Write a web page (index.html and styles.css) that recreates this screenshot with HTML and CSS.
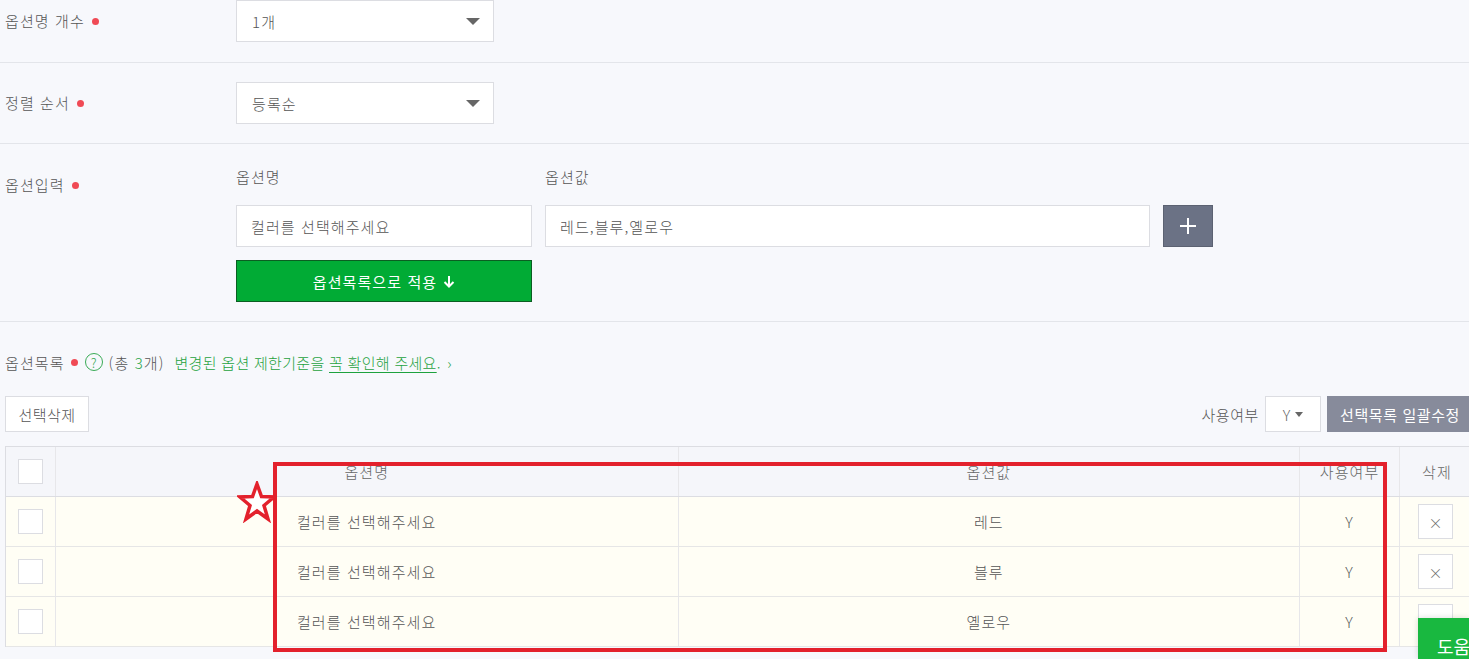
FILE: index.html
```html
<!DOCTYPE html>
<html lang="ko">
<head>
<meta charset="utf-8">
<title>옵션 설정</title>
<link rel="stylesheet" href="styles.css">
</head>
<body>
<div class="page">
  <div class="row row-first">
    <div class="label">옵션명 개수<span class="dot"></span></div>
    <div class="select"><span>1개</span><span class="caret"></span></div>
  </div>
  <div class="row row-second">
    <div class="label">정렬 순서<span class="dot"></span></div>
    <div class="select"><span>등록순</span><span class="caret"></span></div>
  </div>
  <div class="row row-input">
    <div class="label label-top">옵션입력<span class="dot"></span></div>
    <div class="input-area">
      <div class="input-grid">
        <div class="col-name">
          <div class="col-head">옵션명</div>
          <div class="text-input name-input">컬러를 선택해주세요</div>
          <div class="apply-btn">옵션목록으로 적용 <span class="arrow">
            <svg width="12" height="13" viewBox="0 0 12 13"><path d="M6 1v10M1.5 7l4.5 4.5L10.5 7" fill="none" stroke="#fff" stroke-width="2"/></svg>
          </span></div>
        </div>
        <div class="col-value">
          <div class="col-head">옵션값</div>
          <div class="value-line">
            <div class="text-input value-input">레드,블루,옐로우</div>
            <div class="plus-btn">
              <svg width="18" height="18" viewBox="0 0 18 18"><path d="M9 1v16M1 9h16" stroke="#fff" stroke-width="2"/></svg>
            </div>
          </div>
        </div>
      </div>
    </div>
  </div>
  <div class="list-section">
    <div class="list-title">
      <span>옵션목록</span><span class="dot"></span>
      <span class="help-icon">?</span>
      <span class="count">(총 <em>3</em>개)</span>
      <span class="notice">변경된 옵션 제한기준을 <u>꼭 확인해 주세요</u>. <span class="chev">›</span></span>
    </div>
    <div class="toolbar">
      <div class="btn-outline">선택삭제</div>
      <div class="toolbar-right">
        <span class="use-label">사용여부</span>
        <div class="mini-select">Y<span class="mini-caret"></span></div>
        <div class="batch-btn">선택목록 일괄수정</div>
      </div>
    </div>
    <div class="table">
      <div class="tr th">
        <div class="td c-check"><span class="checkbox"></span></div>
        <div class="td c-name center">옵션명</div>
        <div class="td c-value">옵션값</div>
        <div class="td c-use">사용여부</div>
        <div class="td c-del">삭제</div>
      </div>
      <div class="tr">
        <div class="td c-check"><span class="checkbox"></span></div>
        <div class="td c-name">컬러를 선택해주세요</div>
        <div class="td c-value">레드</div>
        <div class="td c-use">Y</div>
        <div class="td c-del"><span class="del-btn">×</span></div>
      </div>
      <div class="tr">
        <div class="td c-check"><span class="checkbox"></span></div>
        <div class="td c-name">컬러를 선택해주세요</div>
        <div class="td c-value">블루</div>
        <div class="td c-use">Y</div>
        <div class="td c-del"><span class="del-btn">×</span></div>
      </div>
      <div class="tr">
        <div class="td c-check"><span class="checkbox"></span></div>
        <div class="td c-name">컬러를 선택해주세요</div>
        <div class="td c-value">옐로우</div>
        <div class="td c-use">Y</div>
        <div class="td c-del"><span class="del-btn">×</span></div>
      </div>
    </div>
  </div>
  <div class="highlight-box"></div>
  <svg class="star" width="40" height="42" viewBox="0 0 40 42"><path d="M20 3 L24.5 15.5 L37 16 L27 24.5 L31 38 L20 30 L9 38 L13 24.5 L3 16 L15.5 15.5 Z" fill="#fff" stroke="#e3212c" stroke-width="3.5" stroke-linejoin="miter"/></svg>
  <div class="help-fab">도움</div>
</div>
</body>
</html>
```

FILE: styles.css
```css
* { box-sizing: border-box; }
html, body {
  margin: 0;
  padding: 0;
  background: #f7f8fc;
  overflow: hidden;
}
body {
  font-family: "Noto Sans CJK KR", "Noto Sans", "Liberation Sans", sans-serif;
  font-size: 15px;
  font-weight: 300;
  letter-spacing: 1.1px;
  color: #555;
  width: 1469px;
  height: 659px;
}
.page {
  position: relative;
  width: 1469px;
  height: 659px;
}
.row {
  display: flex;
  align-items: center;
  border-bottom: 1px solid #e3e5ea;
}
.row-first { padding: 0 0 20px 0; }
.row-second { padding: 19px 0 19px 0; }
.row-input { align-items: flex-start; padding: 20px 0 19px 0; }
.label {
  width: 236px;
  padding-left: 5px;
  display: flex;
  align-items: center;
  line-height: 22px;
  color: #555;
}
.label-top { padding-top: 10px; }
.dot {
  display: inline-block;
  width: 7px;
  height: 7px;
  border-radius: 50%;
  background: #f04a55;
  margin-left: 7px;
}
.select {
  width: 258px;
  height: 42px;
  background: #fff;
  border: 1px solid #dcdde2;
  display: flex;
  align-items: center;
  justify-content: space-between;
  padding: 0 13px 0 15px;
  color: #555;
}
.caret {
  width: 0;
  height: 0;
  border-left: 7px solid transparent;
  border-right: 7px solid transparent;
  border-top: 7px solid #666;
}
.input-grid { display: flex; gap: 13px; }
.col-head {
  height: 26px;
  line-height: 26px;
  margin-bottom: 15px;
  color: #555;
}
.text-input {
  height: 42px;
  background: #fff;
  border: 1px solid #dcdde2;
  display: flex;
  align-items: center;
  padding-left: 14px;
  color: #555;
}
.name-input { width: 296px; }
.value-line { display: flex; gap: 13px; }
.value-input { width: 605px; }
.plus-btn {
  width: 50px;
  height: 42px;
  background: #6b7285;
  border: 1px solid #5c6272;
  display: flex;
  align-items: center;
  justify-content: center;
}
.apply-btn {
  width: 296px;
  height: 42px;
  margin-top: 13px;
  background: #01ab35;
  border: 1px solid #0b5e22;
  color: #fff;
  font-weight: 400;
  display: flex;
  align-items: center;
  justify-content: center;
  gap: 6px;
}
.arrow { display: flex; align-items: center; }
.list-section { padding: 0 0 0 5px; }
.list-title {
  display: flex;
  align-items: center;
  height: 22px;
  margin-top: 29px;
  color: #555;
}
.list-title .dot { margin-left: 6px; margin-right: 7px; }
.help-icon {
  width: 18px;
  height: 18px;
  border: 1px solid #3aab56;
  border-radius: 50%;
  color: #3aab56;
  font-size: 13px;
  letter-spacing: 0;
  display: flex;
  align-items: center;
  justify-content: center;
  line-height: 1;
  margin-right: 6px;
}
.count em { font-style: normal; color: #23a344; }
.notice { color: #1ea23e; margin-left: 10px; letter-spacing: 0.3px; }
.notice u { text-underline-offset: 3px; }
.chev { margin-left: 2px; }
.toolbar {
  display: flex;
  justify-content: space-between;
  align-items: center;
  margin-top: 23px;
  height: 36px;
}
.btn-outline {
  width: 84px;
  height: 36px;
  border: 1px solid #dcdde2;
  background: #fff;
  display: flex;
  align-items: center;
  justify-content: center;
  color: #555;
  letter-spacing: 0.5px;
}
.toolbar-right { display: flex; align-items: center; margin-right: -10px; }
.use-label { margin-right: 6px; letter-spacing: 0.6px; }
.mini-select {
  width: 56px;
  height: 36px;
  background: #fff;
  border: 1px solid #dcdde2;
  display: flex;
  align-items: center;
  justify-content: center;
  gap: 4px;
  color: #666;
}
.mini-caret {
  width: 0;
  height: 0;
  border-left: 4px solid transparent;
  border-right: 4px solid transparent;
  border-top: 5px solid #666;
}
.batch-btn {
  width: 152px;
  height: 36px;
  margin-left: 6px;
  background: #878b9b;
  color: #fff;
  font-weight: 400;
  display: flex;
  align-items: center;
  padding-left: 13px;
  white-space: nowrap;
  letter-spacing: 0.6px;
}
.table {
  margin-top: 14px;
  width: 1475px;
  border-top: 1px solid #dcdde2;
  border-left: 1px solid #dcdde2;
}
.tr {
  display: flex;
  height: 50px;
  border-bottom: 1px solid #e6e6e6;
  background: #fffef5;
}
.tr.th { background: #f5f6fa; border-bottom-color: #dcdde2; }
.td {
  display: flex;
  align-items: center;
  justify-content: center;
  border-right: 1px solid #e7e7ea;
  color: #555;
}
.th .td { color: #666; }
.c-check { width: 50px; }
.c-name { width: 623px; justify-content: flex-start; padding-left: 241px; }
.c-name.center { justify-content: center; padding-left: 0; }
.c-value { width: 622px; }
.c-use { width: 100px; }
.c-del { width: 80px; justify-content: flex-start; padding-left: 18px; border-right: 0; }
.th .c-del { padding-left: 22px; }
.checkbox {
  width: 25px;
  height: 25px;
  background: #fff;
  border: 1px solid #dcdde2;
}
.del-btn {
  width: 35px;
  height: 35px;
  border: 1px solid #dcdde2;
  background: #fff;
  display: flex;
  align-items: center;
  justify-content: center;
  color: #666;
  font-size: 14px;
  letter-spacing: 0;
}
.highlight-box {
  position: absolute;
  left: 273px;
  top: 462px;
  width: 1114px;
  height: 190px;
  border: 4px solid #e3212c;
  pointer-events: none;
}
.star {
  position: absolute;
  left: 237px;
  top: 481px;
}
.help-fab {
  position: absolute;
  left: 1418px;
  top: 618px;
  width: 51px;
  height: 41px;
  background: #19b840;
  color: #fff;
  font-size: 18px;
  font-weight: 400;
  letter-spacing: 0;
  line-height: 22px;
  padding: 17px 0 0 19px;
  white-space: nowrap;
  overflow: hidden;
  box-shadow: 0 0 6px rgba(0,0,0,0.15);
}
```
